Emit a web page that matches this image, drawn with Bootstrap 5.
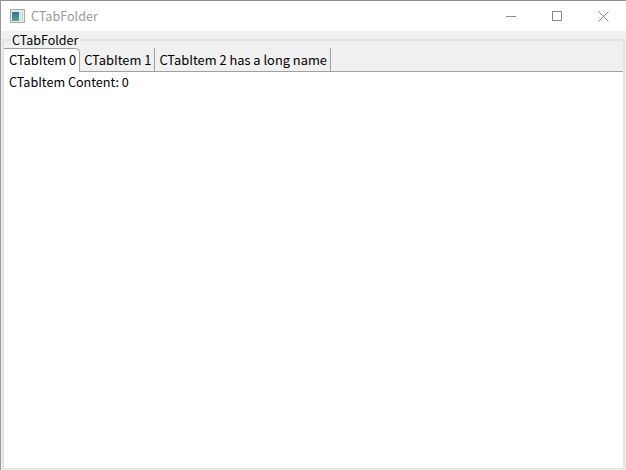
<!DOCTYPE html>
<html lang="en">
<head>
<meta charset="utf-8">
<title>CTabFolder</title>
<link href="https://cdn.jsdelivr.net/npm/bootstrap@5.3.0/dist/css/bootstrap.min.css" rel="stylesheet">
<style>
html,body{margin:0;height:470px;overflow:hidden;background:#f0f0f0}
body{font-family:"Noto Sans CJK SC","Liberation Sans",sans-serif;font-size:12.6px;color:#000}
.shell{width:626px;height:470px;border-top:1px solid #8f8f8f;border-left:1px solid #9a9a9a;background:#f0f0f0}
.titlebar{height:30px;background:#fff;color:#999}
.appicon{margin-left:9px;margin-right:6px}
.capbtn{width:46px;height:30px}
.groupbox{margin:8px 1px 1px 1px;border-top:2px solid #e3e3e3;border-right:2px solid #e3e3e3;border-left:2px solid #e3e3e3;border-bottom:1px solid #e3e3e3;flex:1;min-height:0;position:relative}
.grouplabel{position:absolute;top:-9px;left:6px;background:#f0f0f0;padding:0 2px;line-height:16px;height:16px;font-size:12.5px}
.tabstrip{margin-top:7px;height:24px;border-bottom:1px solid #a0a0a0;font-size:12.85px}
.tabitem{height:23px;line-height:24px;white-space:nowrap;padding:0 3px 0 4px}
.tabitem.on{background:#fff;border-top:1px solid #a0a0a0;border-right:1px solid #a0a0a0;border-radius:0 5px 0 0;height:24px;margin-bottom:-1px;position:relative;padding:0 3px 0 5px;line-height:22px}
.tabitem.off{border-right:1px solid #a0a0a0}
.tabpane{background:#fff;flex:1;padding:1px 5px;line-height:18px}
</style>
</head>
<body>
<div class="shell d-flex flex-column">
  <div class="titlebar d-flex align-items-center">
    <svg class="appicon" width="15" height="14" viewBox="0 0 15 14"><defs><linearGradient id="g" x1="0" y1="0" x2="0" y2="1"><stop offset="0" stop-color="#2f6f9f"/><stop offset="1" stop-color="#5aa98a"/></linearGradient></defs><rect x="0.5" y="0.5" width="14" height="13" fill="#e8e8e8" stroke="#a9a9a9"/><rect x="2" y="3" width="7" height="9" fill="url(#g)"/><rect x="10" y="3" width="3" height="9" fill="#cfe3d8"/></svg>
    <span>CTabFolder</span>
    <div class="d-flex ms-auto">
      <div class="capbtn d-flex align-items-center justify-content-center"><svg width="10" height="10" viewBox="0 0 10 10"><path d="M0 5.5H10" stroke="#8a8a8a" fill="none"/></svg></div>
      <div class="capbtn d-flex align-items-center justify-content-center"><svg width="10" height="10" viewBox="0 0 10 10"><rect x="0.5" y="0.5" width="9" height="9" stroke="#8a8a8a" fill="none"/></svg></div>
      <div class="capbtn d-flex align-items-center justify-content-center"><svg width="11" height="11" viewBox="0 0 11 11"><path d="M0.5 0.5L10.5 10.5M10.5 0.5L0.5 10.5" stroke="#8a8a8a" fill="none"/></svg></div>
    </div>
  </div>
  <div class="groupbox d-flex flex-column">
    <span class="grouplabel">CTabFolder</span>
    <div class="tabstrip d-flex">
      <div class="tabitem on">CTabItem 0</div>
      <div class="tabitem off">CTabItem 1</div>
      <div class="tabitem off">CTabItem 2 has a long name</div>
    </div>
    <div class="tabpane">CTabItem Content: 0</div>
  </div>
</div>
</body>
</html>
